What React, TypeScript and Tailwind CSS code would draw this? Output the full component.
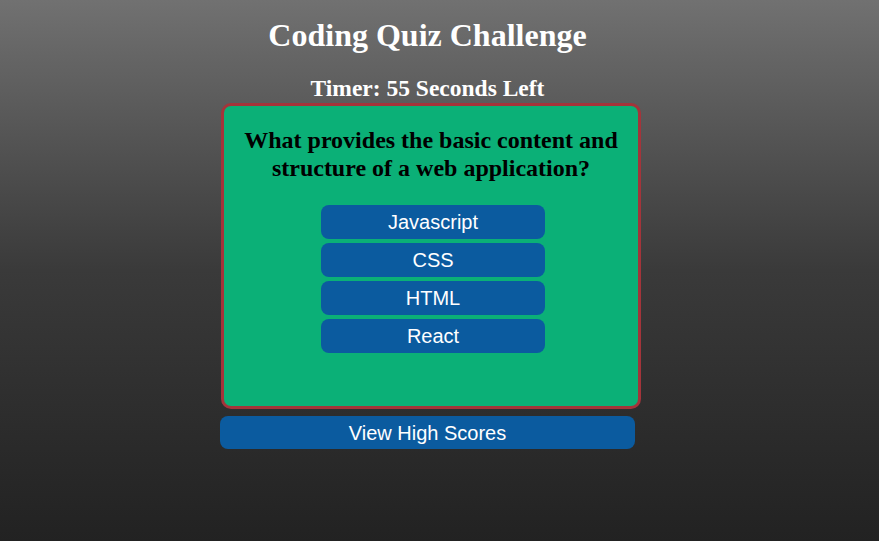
import React from 'react';

const choices = ['Javascript', 'CSS', 'HTML', 'React'];

export default function App() {
  return (
    <div className="min-h-[541px] w-full bg-gradient-to-b from-[#717171] via-[#3a3a3a] to-[#222222] font-['Liberation_Serif',serif]">
      <div className="w-[862px] flex flex-col items-center">
        <h1 className="pt-[16px] -ml-[7px] text-[32px] leading-[38px] font-bold text-white">Coding Quiz Challenge</h1>
        <h2 className="mt-[20px] -ml-[7px] text-[23.5px] leading-[28px] font-bold text-white">Timer: 55 Seconds Left</h2>

        {/* Question card */}
        <div className="mt-[1px] w-[420px] h-[306px] rounded-[10px] border-[3px] border-[#a4343a] bg-[#0bb077] flex flex-col items-center">
          <p className="mt-[20px] px-[10px] text-center text-[24px] leading-[28px] font-bold text-black">
            What provides the basic content and structure of a web application?
          </p>
          <div className="mt-[23px] ml-[4px] flex flex-col gap-[4px]">
            {choices.map((c) => (
              <button
                key={c}
                className="w-[224px] h-[34px] rounded-[8px] bg-[#0b5b9f] text-white text-[20px] font-['Liberation_Sans',Arial,sans-serif]"
              >
                {c}
              </button>
            ))}
          </div>
        </div>

        <button className="mt-[7px] -ml-[7px] w-[415px] h-[33px] rounded-[8px] bg-[#0b5b9f] text-white text-[20px] font-['Liberation_Sans',Arial,sans-serif]">
          View High Scores
        </button>
      </div>
    </div>
  );
}
